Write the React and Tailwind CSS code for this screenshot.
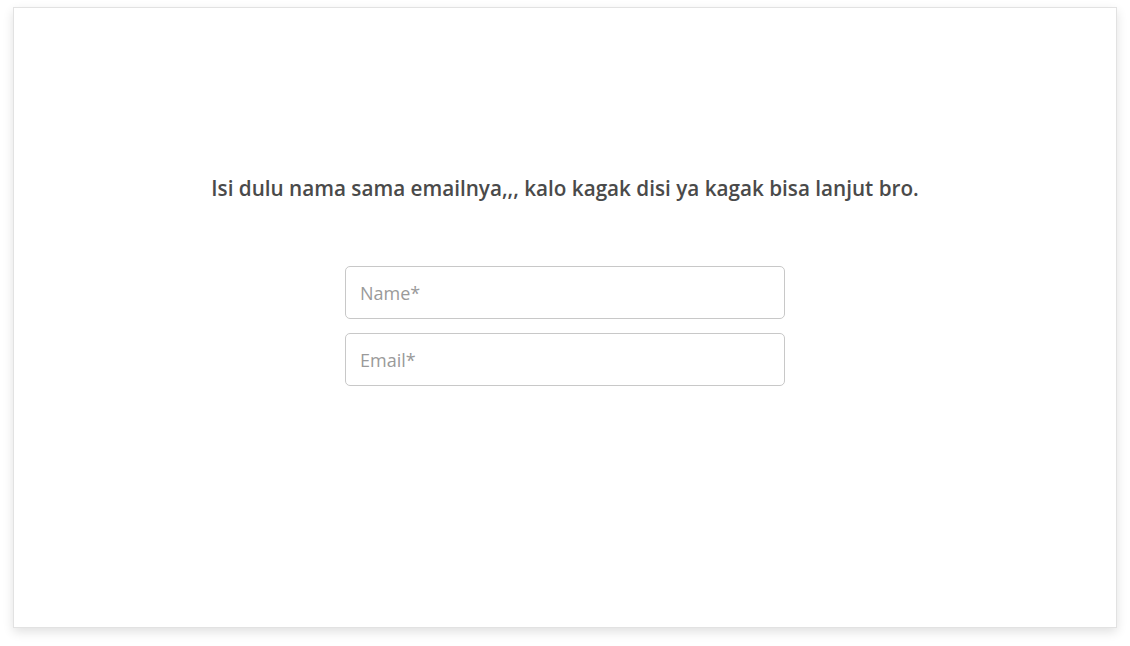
export default function App(){

return(

<div className="min-h-screen bg-white pt-[7px] px-[13px]" style={{fontFamily:'"Open Sans", sans-serif'}}>

{/* Card */}

<div className="h-[621px] bg-white border border-[#e2e2e2] shadow-[0_4px_10px_rgba(0,0,0,0.12)] flex flex-col items-center pt-[166px]">

<p className="text-[20.7px] leading-[28px] font-semibold text-[#4a4a4a]">
Isi dulu nama sama emailnya,,, kalo kagak disi ya kagak bisa lanjut bro.
</p>

<div className="mt-[64px] w-[440px] flex flex-col gap-[14px]">

<input
type="text"
placeholder="Name*"
className="h-[53px] w-full rounded-[5px] border border-[#c8c8c8] px-[14px] text-[18px] text-[#444] placeholder-[#9a9a9a] outline-none"
/>

<input
type="email"
placeholder="Email*"
className="h-[53px] w-full rounded-[5px] border border-[#c8c8c8] px-[14px] text-[18px] text-[#444] placeholder-[#9a9a9a] outline-none"
/>

</div>

</div>

</div>

)

}
